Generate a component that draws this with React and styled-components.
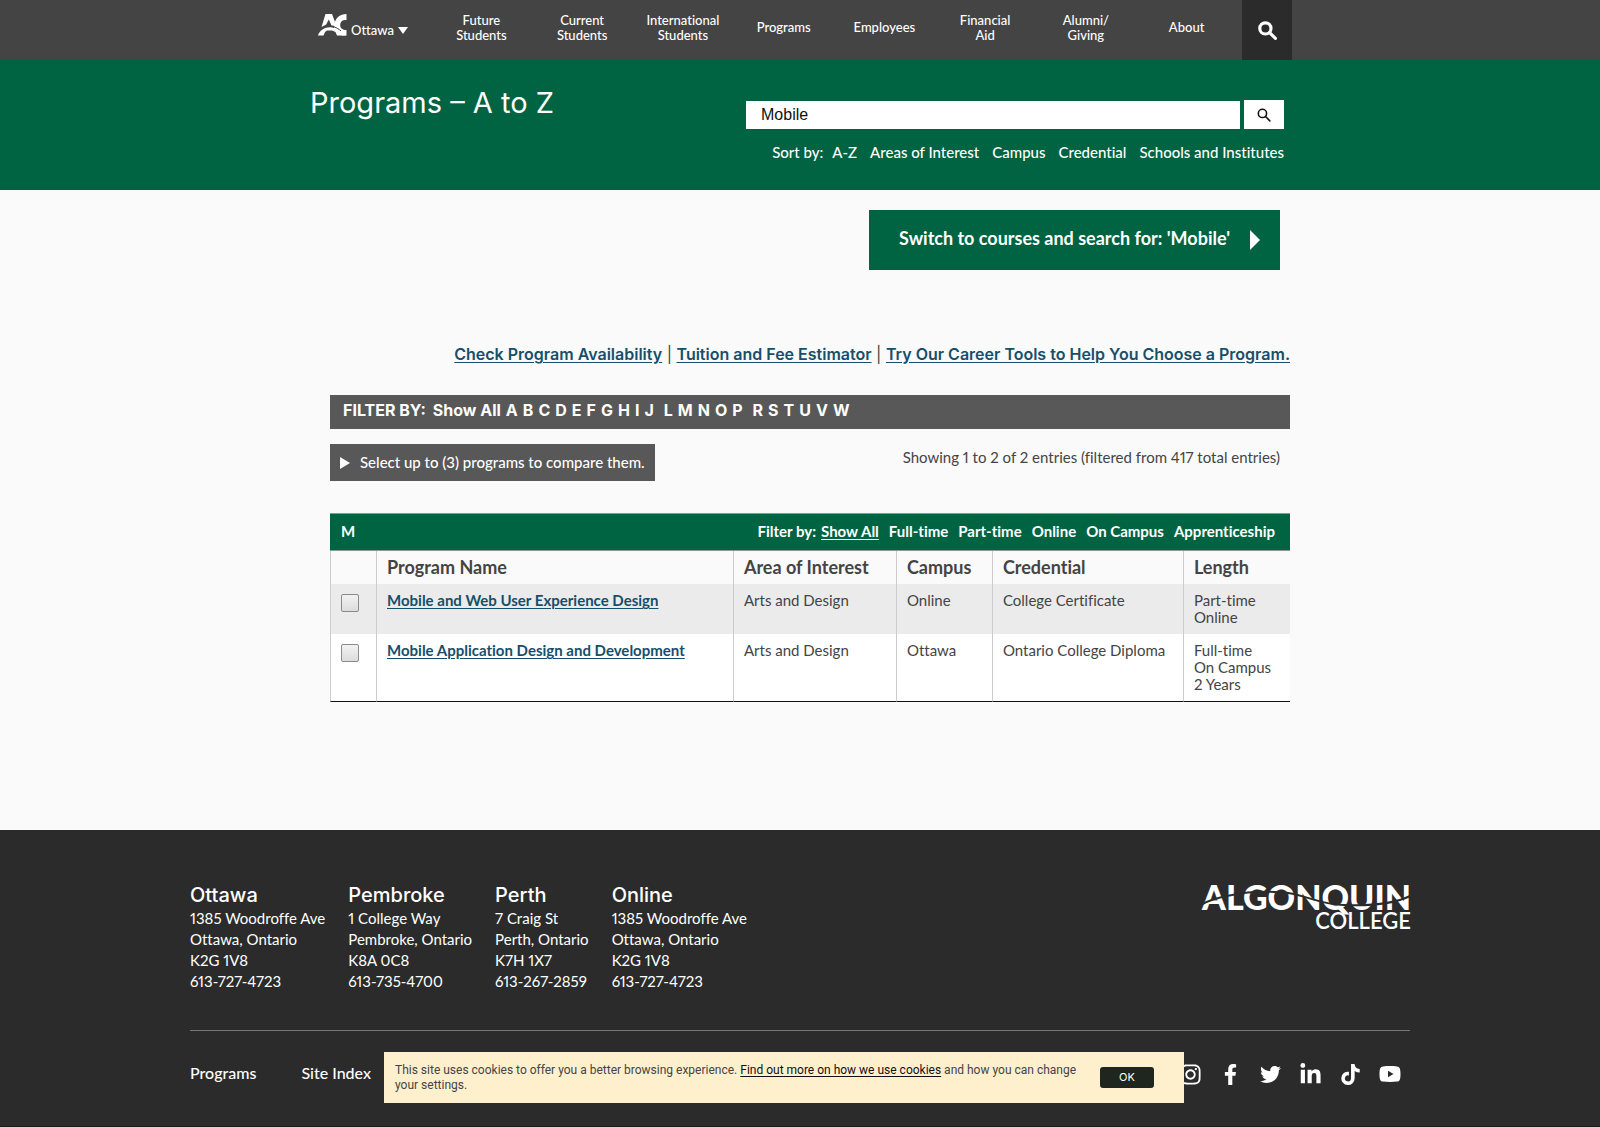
import React, { useState } from "react";
import styled, { createGlobalStyle } from "styled-components";
import { FaFacebookF, FaInstagram, FaLinkedinIn, FaTiktok, FaTwitter } from "react-icons/fa";

const green = "#006341";
const narrow = `Lato, "Liberation Sans", sans-serif`;
const wide = `Inter, "Liberation Sans", sans-serif`;

const GlobalStyle = createGlobalStyle`
  * { box-sizing: border-box; }
  body {
    margin: 0;
    background: #fafafa;
    color: #444;
    font: 400 15px/17px ${narrow};
    font-variant-ligatures: none;
    font-variant-numeric: proportional-nums;
  }
  a { color: inherit; text-decoration: none; }
  button { margin: 0; border: 0; padding: 0; background: none; color: inherit; font: inherit; cursor: pointer; }
  ul { margin: 0; padding: 0; list-style: none; }
  h1, h2, p { margin: 0; }
  svg { display: block; flex: none; }
`;

const Page = styled.div`
  display: flex;
  flex-direction: column;
  min-height: 100vh;
`;

const Container = styled.div`
  width: 100%;
  max-width: 984px;
  margin: 0 auto;
`;

const TopBar = styled.header`
  background: #444;
  color: #fff;
`;

const TopBarInner = styled(Container)`
  display: flex;
  height: 60px;
`;

const CampusSwitch = styled.button`
  display: flex;
  align-items: flex-end;
  gap: 4px;
  width: 123px;
  height: 38px;
  padding: 0 0 2px 10px;
  font-weight: 500;
  font-size: 13px;
  line-height: 12px;
`;

const Down = styled.span`
  margin-bottom: 2px;
  border: solid transparent;
  border-width: 7px 5px 0;
  border-top-color: #fff;
`;

const Nav = styled.nav`
  display: grid;
  flex: 1;
  grid-template-columns: repeat(8, 1fr);
  align-items: center;
  margin-right: 5px;
  padding-bottom: 5px;
  font-weight: 500;
  font-size: 13px;
  line-height: 15px;
  text-align: center;
`;

const NavLink = styled.a`
  white-space: pre-line;
`;

const SearchToggle = styled.button`
  display: grid;
  place-items: center;
  width: 50px;
  background: #2b2b2b;
`;

const Banner = styled.section`
  background: ${green};
  color: #fff;
`;

const BannerInner = styled(Container)`
  display: flex;
  justify-content: space-between;
  min-height: 130px;
  padding: 0 8px 0 2px;
`;

const Title = styled.h1`
  padding-top: 26px;
  font: 400 29px/34px ${wide};
`;

const SearchArea = styled.div`
  display: flex;
  flex-direction: column;
  align-items: flex-end;
  gap: 13px;
  padding-top: 40px;
`;

const SearchForm = styled.form`
  display: flex;
  align-items: flex-end;
  gap: 4px;
  width: 538px;
`;

const SearchInput = styled.input`
  flex: 1;
  height: 28px;
  border: 0;
  border-radius: 0;
  padding: 0 15px;
  background: #fff;
  color: #111;
  font: 400 16px "Liberation Sans", sans-serif;
`;

const SearchButton = styled.button`
  display: grid;
  place-items: center;
  width: 40px;
  height: 29px;
  background: #fff;
  color: #111;
`;

const Inline = styled.div`
  display: flex;
  gap: ${(p) => p.$gap}px;
`;

const SortRow = styled(Inline)`
  font-weight: 500;
  font-size: 15px;
  line-height: 20px;
`;

const Main = styled(Container)`
  display: flex;
  flex-direction: column;
  padding: 20px 2px 128px 22px;
`;

const SwitchLink = styled.a`
  display: flex;
  align-self: flex-end;
  align-items: center;
  gap: 20px;
  height: 60px;
  margin-right: 10px;
  padding: 0 20px 0 30px;
  background: ${green};
  color: #fff;
  font-weight: 700;
  font-size: 18px;
  line-height: 20px;

  span { padding-bottom: 4px; }
`;

const Right = styled.i`
  border: solid transparent;
  border-width: ${(p) => p.$half}px 0 ${(p) => p.$half}px 10px;
  border-left-color: #fff;
`;

const Tools = styled.p`
  margin-top: 74px;
  font: 400 16px/20px ${wide};
  text-align: right;

  a {
    color: #174f6b;
    font-weight: 600;
    text-decoration: underline;
    text-underline-offset: 2px;
  }
`;

const LetterBar = styled.div`
  display: flex;
  align-items: center;
  gap: 7px;
  min-height: 34px;
  margin-top: 31px;
  padding: 0 13px 4px;
  background: #585858;
  color: #fff;
  font: 700 16px/20px ${wide};
`;

const Letters = styled.ul`
  display: flex;
  gap: 5px;
`;

const Summary = styled.div`
  display: flex;
  justify-content: space-between;
  margin: 15px 0 32px;
  padding-right: 10px;
`;

const CompareButton = styled.button`
  display: flex;
  align-items: center;
  gap: 10px;
  height: 37px;
  padding: 0 10px;
  background: #585858;
  color: #fff;
  font-weight: 500;
`;

const Count = styled.p`
  padding-top: 5px;
`;

const Table = styled.table`
  width: 100%;
  border-spacing: 0;
  table-layout: fixed;
  text-align: left;
`;

const Col = styled.col`
  width: ${(p) => p.$width}px;
`;

const GroupCell = styled.th`
  height: 38px;
  border: solid #8c9a94;
  border-width: 1px 0;
  padding: 0 15px 2px 11px;
  background: ${green};
  color: #fff;
  font-weight: 700;
`;

const GroupRow = styled.div`
  display: flex;
  justify-content: space-between;
`;

const HeadCell = styled.th`
  height: 33px;
  border-left: 1px solid #ccc;
  padding: 0 10px 2px;
  font-weight: 700;
  font-size: 18px;
  line-height: 20px;
`;

const Row = styled.tr`
  background: ${(p) => (p.$shaded ? "#ebebeb" : "#fff")};

  &:last-child td { border-bottom: 1px solid #111; }
`;

const Cell = styled.td`
  border-left: 1px solid #ccc;
  padding: 8px 10px;
  vertical-align: top;
`;

const ProgramLink = styled.a`
  color: #174f6b;
  font-weight: 700;
  text-decoration: underline;
  text-underline-offset: 2px;
`;

const Checkbox = styled.input`
  display: block;
  appearance: none;
  width: 18px;
  height: 18px;
  margin: 2px 0 0;
  border: 1px solid #8a8a8a;
  border-radius: 2px;
  background: linear-gradient(#f2f2f2, #dcdcdc);

  &:checked { background: ${green}; }
`;

const FilterButton = styled.button`
  text-decoration: ${(p) => (p.$active ? "underline" : "none")};
  text-underline-offset: 2px;
`;

const Footer = styled.footer`
  flex: 1;
  border-bottom: 1px solid #1a1a1a;
  padding: 53px 20px 32px;
  background: #2b2b2b;
  color: #fff;
`;

const FooterInner = styled.div`
  max-width: 1220px;
  margin: 0 auto;
`;

const FooterTop = styled.div`
  display: flex;
  justify-content: space-between;
  padding-bottom: 38px;
  border-bottom: 1px solid #757575;
`;

const Campus = styled.address`
  font-style: normal;
  line-height: 21px;

  h2 {
    margin-bottom: 1px;
    font: 500 20px/24px ${wide};
  }
`;

const LogoLink = styled.a`
  margin: -8px -2px 0 0;
`;

const FooterBottom = styled.div`
  display: flex;
  justify-content: space-between;
  align-items: center;
  height: 40px;
  margin-top: 23px;
  font-weight: 500;
  font-size: 16px;
`;

const FooterLinks = styled(Inline)`
  padding-bottom: 4px;
`;

const SocialLink = styled.a`
  display: grid;
  place-items: center;
  width: 40px;
  height: 40px;
`;

const Cookies = styled.aside`
  position: fixed;
  bottom: 24px;
  left: 24%;
  display: flex;
  align-items: center;
  gap: 10px;
  width: 50%;
  min-height: 51px;
  padding: 0 30px 0 11px;
  background: #fff0cd;
  color: #444;
  font: 400 12px/15px Roboto, "Liberation Sans", sans-serif;

  p { flex: 1; }
  a { color: #111; text-decoration: underline; text-underline-offset: 2px; }
`;

const OkButton = styled.button`
  width: 54px;
  height: 21px;
  border-radius: 3px;
  background: #1f2620;
  color: #fff;
  font: 400 11px/21px ${wide};
`;

const AcMark = () => (
  <svg width="29" height="22" viewBox="0 0 29 22" aria-hidden="true">
    <path d="M7.500 0h6.500l4.500 12-5-.500-2.700-6-2.600 5L3.500 13z" fill="#fff" />
    <path d="M28.500 0v6c-4-.6-6.300 1.500-6.300 5s2.300 5 6.300 5v5.500h-4C17 20 15 15.500 16.500 9.500 18 3.500 22 0 28.500 0z" fill="#fff" />
    <path d="M0 21.500C2 15.500 8 12.500 14 13.500c6 1 9 4 14 8h-9L17.500 18l-3.500-1.500h-5L7 18l-1.500 3.500z" fill="#fff" />
    <path d="M3 15.200C7 12.200 12 11.700 16 12.800c3 1 5 2.800 7 4" fill="none" stroke="#444" strokeWidth="1" />
  </svg>
);

const CollegeLogo = () => (
  <svg width="212" height="62" viewBox="0 -10 212 62" role="img" aria-label="Algonquin College">
    <text x="211" y="25" textAnchor="end" fill="#fff" fontFamily="Lato, sans-serif" fontWeight="900" fontSize="34">
      ALGONQUIN
    </text>
    <path
      d="M-1 21C8 15 20 12 32 10 50 6 70 6 88 8c20 3 34 12 56 12 26 1 50-1 66-9"
      fill="none"
      stroke="#2b2b2b"
      strokeWidth="2"
    />
    <text x="211" y="44" textAnchor="end" fill="#fff" fontFamily="Lato, sans-serif" fontWeight="600" fontSize="22">
      COLLEGE
    </text>
  </svg>
);

const Magnifier = ({ size, weight }) => (
  <svg width={size} height={size} viewBox="0 0 18 18" fill="none" stroke="currentColor" strokeWidth={weight} aria-hidden="true">
    <circle cx="7" cy="7" r="5.300" />
    <path d="M11 11l5.500 5.500" strokeLinecap="round" />
  </svg>
);

const YoutubeIcon = () => (
  <svg width="22" height="16" viewBox="0 0 22 16" aria-hidden="true">
    <path fill="#fff" fillRule="evenodd" d="M4 .4C8 0 14 0 18 .4c2.500.3 3.500 1.600 3.500 7.600s-1 7.300-3.500 7.600c-4 .4-10 .4-14 0C1.500 15.300.5 14 .5 8S1.500.7 4 .4zM9 4.800v6.400L14.500 8z" />
  </svg>
);

const navItems = ["Future\nStudents", "Current\nStudents", "International\nStudents", "Programs", "Employees", "Financial\nAid", "Alumni/\nGiving", "About"];
const sortItems = ["A-Z", "Areas of Interest", "Campus", "Credential", "Schools and Institutes"];
const letters = ["Show All", ..."ABCDEFGHIJ", "", ..."LMNOP", "", ..."RSTUVW"];
const deliveryFilters = ["Show All", "Full-time", "Part-time", "Online", "On Campus", "Apprenticeship"];
const columns = ["Program Name", "Area of Interest", "Campus", "Credential", "Length"];

const programs = [
  { name: "Mobile and Web User Experience Design", area: "Arts and Design", campus: "Online", credential: "College Certificate", length: ["Part-time", "Online"] },
  { name: "Mobile Application Design and Development", area: "Arts and Design", campus: "Ottawa", credential: "Ontario College Diploma", length: ["Full-time", "On Campus", "2 Years"] },
];

const campuses = [
  { name: "Ottawa", lines: ["1385 Woodroffe Ave", "Ottawa, Ontario", "K2G 1V8"], phone: "613-727-4723" },
  { name: "Pembroke", lines: ["1 College Way", "Pembroke, Ontario", "K8A 0C8"], phone: "613-735-4700" },
  { name: "Perth", lines: ["7 Craig St", "Perth, Ontario", "K7H 1X7"], phone: "613-267-2859" },
  { name: "Online", lines: ["1385 Woodroffe Ave", "Ottawa, Ontario", "K2G 1V8"], phone: "613-727-4723" },
];

const social = [
  ["Instagram", <FaInstagram size={23} />],
  ["Facebook", <FaFacebookF size={21} />],
  ["Twitter", <FaTwitter size={21} />],
  ["LinkedIn", <FaLinkedinIn size={23} />],
  ["TikTok", <FaTiktok size={21} />],
  ["YouTube", <YoutubeIcon />],
];

export default function App() {
  const [query, setQuery] = useState("Mobile");
  const [delivery, setDelivery] = useState("Show All");
  const [cookies, setCookies] = useState(true);

  return (
    <Page>
      <GlobalStyle />
      <TopBar>
        <TopBarInner>
          <CampusSwitch type="button">
            <AcMark />
            Ottawa
            <Down />
          </CampusSwitch>
          <Nav>
            {navItems.map((item) => (
              <NavLink href="#" key={item}>{item}</NavLink>
            ))}
          </Nav>
          <SearchToggle type="button" aria-label="Search site">
            <Magnifier size={19} weight={3} />
          </SearchToggle>
        </TopBarInner>
      </TopBar>

      <Banner>
        <BannerInner>
          <Title>Programs – A to Z</Title>
          <SearchArea>
            <SearchForm onSubmit={(e) => e.preventDefault()}>
              <SearchInput aria-label="Search programs" value={query} onChange={(e) => setQuery(e.target.value)} />
              <SearchButton type="submit" aria-label="Search">
                <Magnifier size={14} weight={2} />
              </SearchButton>
            </SearchForm>
            <SortRow $gap={9}>
              <span>Sort by:</span>
              <Inline $gap={13}>
                {sortItems.map((item) => (
                  <a href="#" key={item}>{item}</a>
                ))}
              </Inline>
            </SortRow>
          </SearchArea>
        </BannerInner>
      </Banner>

      <Main as="main">
        <SwitchLink href="#">
          <span>Switch to courses and search for: 'Mobile'</span>
          <Right $half={10} />
        </SwitchLink>

        <Tools>
          <a href="#">Check Program Availability</a> | <a href="#">Tuition and Fee Estimator</a> |{" "}
          <a href="#">Try Our Career Tools to Help You Choose a Program.</a>
        </Tools>

        <LetterBar>
          <span>FILTER BY:</span>
          <Letters>
            {letters.map((letter, i) => (
              <li key={i}>{letter && <button type="button">{letter}</button>}</li>
            ))}
          </Letters>
        </LetterBar>

        <Summary>
          <CompareButton type="button">
            <Right $half={6} />
            Select up to (3) programs to compare them.
          </CompareButton>
          <Count>Showing 1 to 2 of 2 entries (filtered from 417 total entries)</Count>
        </Summary>

        <Table>
          <colgroup>
            <Col $width={46} />
            <col />
            <Col $width={163} />
            <Col $width={96} />
            <Col $width={191} />
            <Col $width={107} />
          </colgroup>
          <thead>
            <tr>
              <GroupCell colSpan={6}>
                <GroupRow>
                  <span>M</span>
                  <Inline $gap={5}>
                    <span>Filter by:</span>
                    <Inline $gap={10}>
                      {deliveryFilters.map((item) => (
                        <FilterButton type="button" key={item} $active={item === delivery} onClick={() => setDelivery(item)}>
                          {item}
                        </FilterButton>
                      ))}
                    </Inline>
                  </Inline>
                </GroupRow>
              </GroupCell>
            </tr>
            <tr>
              <HeadCell aria-label="Compare" />
              {columns.map((column) => (
                <HeadCell key={column}>{column}</HeadCell>
              ))}
            </tr>
          </thead>
          <tbody>
            {programs.map((program, i) => (
              <Row key={program.name} $shaded={i % 2 === 0}>
                <Cell>
                  <Checkbox type="checkbox" aria-label={`Compare ${program.name}`} />
                </Cell>
                <Cell><ProgramLink href="#">{program.name}</ProgramLink></Cell>
                <Cell>{program.area}</Cell>
                <Cell>{program.campus}</Cell>
                <Cell>{program.credential}</Cell>
                <Cell>
                  {program.length.map((line) => (
                    <div key={line}>{line}</div>
                  ))}
                </Cell>
              </Row>
            ))}
          </tbody>
        </Table>
      </Main>

      <Footer>
        <FooterInner>
          <FooterTop>
            <Inline $gap={23}>
              {campuses.map((campus) => (
                <Campus key={campus.name}>
                  <h2>{campus.name}</h2>
                  {campus.lines.map((line) => (
                    <div key={line}>{line}</div>
                  ))}
                  <a href="#">{campus.phone}</a>
                </Campus>
              ))}
            </Inline>
            <LogoLink href="#"><CollegeLogo /></LogoLink>
          </FooterTop>
          <FooterBottom>
            <FooterLinks $gap={45}>
              <a href="#">Programs</a>
              <a href="#">Site Index</a>
            </FooterLinks>
            <Inline $gap={0}>
              {social.map(([label, icon]) => (
                <SocialLink href="#" key={label} aria-label={label}>{icon}</SocialLink>
              ))}
            </Inline>
          </FooterBottom>
        </FooterInner>
      </Footer>

      {cookies && (
        <Cookies>
          <p>
            This site uses cookies to offer you a better browsing experience.{" "}
            <a href="#">Find out more on how we use cookies</a> and how you can change your settings.
          </p>
          <OkButton type="button" onClick={() => setCookies(false)}>OK</OkButton>
        </Cookies>
      )}
    </Page>
  );
}
